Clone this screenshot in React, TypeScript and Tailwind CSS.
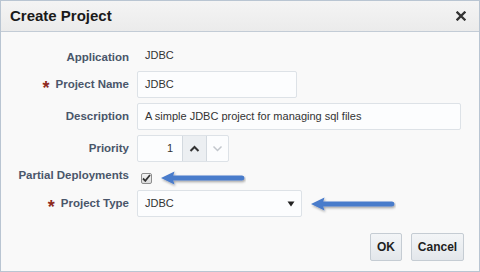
import React from "react";

const font = { fontFamily: '"Liberation Sans", Arial, sans-serif' };

function Label({ text, req }: { text: string; req?: boolean }) {
  return (
    <div className="flex items-center justify-end text-[11.5px] font-bold text-[#4a566a]">
      {req && <span className="mr-[6px] text-[18px] leading-none text-[#8e2a1d] translate-y-[3px]">*</span>}
      <span>{text}</span>
    </div>
  );
}

function Arrow({ className }: { className: string }) {
  return (
    <svg className={`absolute ${className}`} width="86" height="18" viewBox="0 0 86 18">
      <defs>
        <filter id="sh" x="-10%" y="-50%" width="120%" height="200%">
          <feDropShadow dx="1" dy="1.5" stdDeviation="1" floodColor="#000" floodOpacity="0.35" />
        </filter>
      </defs>
      <g filter="url(#sh)">
        <path d="M1 8 L14.5 1.5 L12.5 8 L14.5 14.5 Z" fill="#4a7bcb" />
        <path d="M12 5.4 L82 5.4 Q84.5 5.8 84.5 8 Q84.5 10.2 82 10.6 L12 10.6 Z" fill="#4a7bcb" />
      </g>
    </svg>
  );
}

export default function App() {
  return (
    <div style={font} className="relative w-[480px] h-[272px] border border-[#b9c5d2] bg-[#f9f9f9] text-[#333] overflow-hidden">
      <div className="h-[31px] border-b border-[#c3ccd6] bg-gradient-to-b from-[#f4f4f4] to-[#ebebeb] flex items-center justify-between pl-[9px] pr-[13px]">
        <span className="text-[15px] font-bold text-[#1a1a1a]">Create Project</span>
        <svg width="10" height="10" viewBox="0 0 10 10">
          <path d="M1.5 1.5 L8.5 8.5 M8.5 1.5 L1.5 8.5" stroke="#333" strokeWidth="2.3" strokeLinecap="square" />
        </svg>
      </div>

      <div className="grid grid-cols-[128px_1fr] gap-x-[8px] pt-[13px]">
        <div className="h-[25px] flex justify-end items-center"><Label text="Application" /></div>
        <div className="h-[25px] flex items-center pl-[8px] text-[11px] text-[#333] -translate-y-[2px]">JDBC</div>

        <div className="mt-[1px] h-[27px] flex justify-end items-center"><Label text="Project Name" req /></div>
        <div className="mt-[1px] h-[27px]">
          <div className="w-[160px] h-[27px] border border-[#dde2e7] bg-[#fcfdfe] rounded-[2px] flex items-center pl-[7px] text-[11px]">JDBC</div>
        </div>

        <div className="mt-[5px] h-[27px] flex justify-end items-center"><Label text="Description" /></div>
        <div className="mt-[5px] h-[27px]">
          <div className="w-[324px] h-[27px] border border-[#dde2e7] bg-[#fcfdfe] rounded-[2px] flex items-center pl-[7px] text-[11px]">A simple JDBC project for managing sql files</div>
        </div>

        <div className="mt-[5px] h-[27px] flex justify-end items-center"><Label text="Priority" /></div>
        <div className="mt-[5px] h-[27px]">
          <div className="w-[92px] h-[27px] border border-[#dde2e7] rounded-[2px] flex bg-[#fcfdfe]">
            <div className="w-[44px] flex items-center justify-end pr-[9px] text-[11px]">1</div>
            <div className="w-[25px] bg-[#eceff2] border-x border-[#d3d9df] flex items-center justify-center">
              <svg width="11" height="7" viewBox="0 0 11 7"><path d="M1.5 6 L5.5 2 L9.5 6" fill="none" stroke="#333" strokeWidth="2" /></svg>
            </div>
            <div className="flex-1 flex items-center justify-center">
              <svg width="11" height="7" viewBox="0 0 11 7"><path d="M1.5 1.5 L5.5 5.5 L9.5 1.5" fill="none" stroke="#c2c7cc" strokeWidth="1.5" /></svg>
            </div>
          </div>
        </div>

        <div className="h-[28px] flex justify-end items-center"><Label text="Partial Deployments" /></div>
        <div className="h-[28px] flex items-center pl-[4px]">
          <div className="w-[11px] h-[11px] border border-[#8d8d8d] rounded-[2px] bg-gradient-to-b from-[#f4f4f4] to-[#dcdcdc] flex items-center justify-center translate-y-[2px]">
            <svg width="9" height="8" viewBox="0 0 9 8"><path d="M1 4.5 L3.3 6.8 L8 1" fill="none" stroke="#333" strokeWidth="1.8" /></svg>
          </div>
        </div>

        <div className="h-[27px] flex justify-end items-center"><Label text="Project Type" req /></div>
        <div className="h-[27px]">
          <div className="w-[165px] h-[27px] border border-[#dde2e7] bg-[#fcfdfe] rounded-[2px] flex items-center justify-between pl-[7px] pr-[6px] text-[11px]">
            <span>JDBC</span>
            <svg width="8" height="6" viewBox="0 0 8 6"><path d="M0.5 0.5 L7.5 0.5 L4 5.5 Z" fill="#222" /></svg>
          </div>
        </div>
      </div>

      <div className="flex justify-end gap-[9px] pr-[15px] mt-[16px]">
        <button className="w-[32px] h-[28px] border border-[#c5ccd3] rounded-[2px] bg-gradient-to-b from-[#f3f5f7] to-[#e3e7eb] text-[12px] font-bold text-[#1f1f1f]">OK</button>
        <button className="w-[53px] h-[28px] border border-[#c5ccd3] rounded-[2px] bg-gradient-to-b from-[#f3f5f7] to-[#e3e7eb] text-[12px] font-bold text-[#1f1f1f]">Cancel</button>
      </div>

      <Arrow className="left-[159px] top-[169px]" />
      <Arrow className="left-[309px] top-[195px]" />
    </div>
  );
}
